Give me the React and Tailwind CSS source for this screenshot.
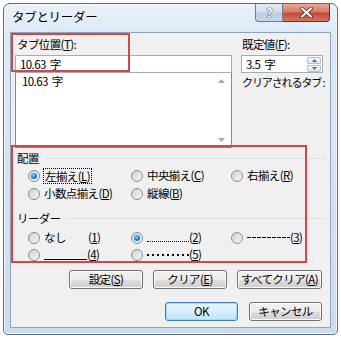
import React from "react";

const font = "font-['Noto_Sans_CJK_JP','Noto_Sans',sans-serif]";

// Win7 style radio
const Radio = ({ checked }) => (
    <span className="w-[12px] h-[12px] shrink-0 rounded-full border border-[#8b8d8f] bg-gradient-to-br from-[#cfd1d3] to-[#f7f7f7] flex items-center justify-center">
        {checked && (
            <span className="w-[6px] h-[6px] rounded-full bg-[radial-gradient(circle_at_40%_35%,#8fd3ff_0,#2a8ad6_45%,#0b4e95_100%)]" />
        )}
    </span>
);

const Key = ({ children }) => <span className="underline underline-offset-1">{children}</span>;

const Btn = ({ children, w, primary }) => (
    <button
        className={`h-[19px] rounded-[3px] border whitespace-nowrap leading-none text-black flex items-center justify-center ${w} ${
            primary
                ? "border-[#3c7fb1] bg-gradient-to-b from-[#eaf6fd] to-[#bee6fd] shadow-[inset_0_0_0_1px_#a7d9f5]"
                : "border-[#707070] bg-[linear-gradient(to_bottom,#f2f2f2_0%,#ebebeb_50%,#dddddd_51%,#cfcfcf_100%)] shadow-[inset_0_0_0_1px_#fcfcfc]"
        }`}
    >
        {children}
    </button>
);

const App = () => {
    return (
        <div className={`w-[341px] h-[339px] bg-white pt-[3px] pl-[3px] text-[11.5px] tracking-[-0.6px] text-black select-none ${font}`}>
            <div className="w-[335px] h-[332px] rounded-t-[7px] rounded-b-[5px] border border-[#5b6a7c] bg-[linear-gradient(to_bottom,#eaf1f9_0px,#dde9f6_28px,#cbdcf0_100%)] flex flex-col px-[6px] pb-[6px] shadow-[inset_0_0_0_1px_#f4f8fc]">
                {/* title bar */}
                <div className="h-[28px] flex items-start justify-between shrink-0">
                    <div className="pl-[2px] pt-[5px] text-[12.5px] leading-[16px] tracking-[-0.3px] text-black">タブとリーダー</div>
                    <div className="flex mr-[1px]">
                        <div className="w-[28px] h-[18px] rounded-bl-[4px] border border-t-0 border-[#6d7d92] bg-[linear-gradient(to_bottom,#e4ecf5_0%,#d3dfec_45%,#bccde0_55%,#c8d7e8_100%)] flex items-center justify-center text-[13px] font-bold text-white [text-shadow:0_0_1px_#222,0_0_1px_#222]">
                            ?
                        </div>
                        <div className="w-[47px] h-[18px] rounded-br-[4px] border border-t-0 border-l-0 border-[#6b2f28] bg-[linear-gradient(to_bottom,#e9a898_0%,#d97a66_45%,#c44a36_55%,#d7745d_100%)] flex items-center justify-center">
                            <svg width="13" height="11" viewBox="0 0 13 11">
                                <path d="M2 1.5 L11 9.5 M11 1.5 L2 9.5" stroke="#3b2020" strokeWidth="3.6" strokeLinecap="round" />
                                <path d="M2 1.5 L11 9.5 M11 1.5 L2 9.5" stroke="#ffffff" strokeWidth="2.2" strokeLinecap="round" />
                            </svg>
                        </div>
                    </div>
                </div>

                {/* client area */}
                <div className="relative flex-1 border border-[#8fa3bb] bg-[#f0f0f0] flex flex-col">
                    {/* top part */}
                    <div className="flex pt-[2px] pl-[4px]">
                        <div className="w-[217px] flex flex-col">
                            <div className="h-[18px] leading-[18px] pl-[2px]">
                                タブ位置(<Key>T</Key>):
                            </div>
                            <div className="mt-[2px] h-[18px] border border-[#a5acb5] bg-white pl-[4px] leading-[16px]">
                                10.63<span className="ml-[4px]">字</span>
                            </div>
                            <div className="relative h-[75px] border border-t-0 border-[#828790] bg-white pl-[6px] leading-[16px]">
                                10.63<span className="ml-[4px]">字</span>
                                <svg className="absolute right-[6px] top-[6px]" width="7" height="4" viewBox="0 0 7 4">
                                    <path d="M0 4 L3.5 0 L7 4 Z" fill="#a9a9a9" />
                                </svg>
                                <svg className="absolute right-[6px] bottom-[5px]" width="7" height="4" viewBox="0 0 7 4">
                                    <path d="M0 0 L3.5 4 L7 0 Z" fill="#a9a9a9" />
                                </svg>
                            </div>
                        </div>
                        <div className="ml-[9px] w-[86px] flex flex-col">
                            <div className="h-[18px] leading-[18px] pl-[1px]">
                                既定値(<Key>F</Key>):
                            </div>
                            <div className="mt-[2px] w-[82px] h-[18px] border border-[#a5acb5] bg-white pl-[4px] flex items-center justify-between">
                                <span className="leading-[16px]">3.5<span className="ml-[4px]">字</span></span>
                                <div className="w-[14px] h-[15px] mr-px flex flex-col gap-px">
                                    <div className="flex-1 rounded-t-[2px] border border-[#b4c2d2] bg-gradient-to-b from-[#f4f8fc] to-[#dce7f2] flex items-center justify-center">
                                        <svg width="5" height="3" viewBox="0 0 5 3"><path d="M0 3 L2.5 0 L5 3 Z" fill="#3a6ea5" /></svg>
                                    </div>
                                    <div className="flex-1 rounded-b-[2px] border border-[#b4c2d2] bg-gradient-to-b from-[#f4f8fc] to-[#dce7f2] flex items-center justify-center">
                                        <svg width="5" height="3" viewBox="0 0 5 3"><path d="M0 0 L2.5 3 L5 0 Z" fill="#3a6ea5" /></svg>
                                    </div>
                                </div>
                            </div>
                            <div className="h-[18px] leading-[18px] pl-[1px] whitespace-nowrap text-[11px] tracking-[-1.1px]">クリアされるタブ :</div>
                        </div>
                    </div>

                    {/* 配置 */}
                    <div className="mt-px h-[18px] flex items-center pl-[6px] pr-[5px]">
                        <span className="leading-[18px]">配置</span>
                        <span className="ml-[6px] flex-1 h-px bg-[#d5dfe5]" />
                    </div>
                    <div className="grid grid-cols-[103px_100px_1fr] pl-[17px]">
                        <div className="h-[18px] flex items-center gap-[3px]">
                            <Radio checked />
                            <span className="border border-dotted border-black px-px leading-[14px]">
                                左揃え(<Key>L</Key>)
                            </span>
                        </div>
                        <div className="h-[18px] flex items-center gap-[4px]">
                            <Radio />
                            <span>中央揃え(<Key>C</Key>)</span>
                        </div>
                        <div className="h-[18px] flex items-center gap-[4px]">
                            <Radio />
                            <span>右揃え(<Key>R</Key>)</span>
                        </div>
                        <div className="h-[18px] flex items-center gap-[4px]">
                            <Radio />
                            <span>小数点揃え(<Key>D</Key>)</span>
                        </div>
                        <div className="h-[18px] flex items-center gap-[4px]">
                            <Radio />
                            <span>縦線(<Key>B</Key>)</span>
                        </div>
                    </div>

                    {/* リーダー */}
                    <div className="mt-[6px] h-[18px] flex items-center pl-[6px] pr-[5px]">
                        <span className="leading-[18px]">リーダー</span>
                        <span className="ml-[6px] flex-1 h-px bg-[#d5dfe5]" />
                    </div>
                    <div className="mt-[2px] grid grid-cols-[103px_100px_1fr] pl-[17px]">
                        <div className="h-[17px] flex items-center gap-[4px]">
                            <Radio />
                            <span className="w-[40px]">なし</span>
                            <span>(<Key>1</Key>)</span>
                        </div>
                        <div className="h-[17px] flex items-center gap-[4px]">
                            <Radio checked />
                            <span className="w-[42px] h-px border-t border-dotted border-black translate-y-[4px]" />
                            <span className="-ml-[4px]">(<Key>2</Key>)</span>
                        </div>
                        <div className="h-[17px] flex items-center gap-[4px]">
                            <Radio />
                            <span className="w-[43px] h-px bg-[repeating-linear-gradient(90deg,#000_0_4px,transparent_4px_5px)]" />
                            <span className="-ml-[4px]">(<Key>3</Key>)</span>
                        </div>
                        <div className="h-[17px] flex items-center gap-[4px]">
                            <Radio />
                            <span className="w-[43px] h-px bg-black translate-y-[5px]" />
                            <span className="-ml-[4px]">(<Key>4</Key>)</span>
                        </div>
                        <div className="h-[17px] flex items-center gap-[4px]">
                            <Radio />
                            <span className="w-[42px] h-[2px] bg-[repeating-linear-gradient(90deg,#000_0_2px,transparent_2px_5px)]" />
                            <span className="-ml-[4px]">(<Key>5</Key>)</span>
                        </div>
                    </div>

                    {/* buttons */}
                    <div className="mt-[7px] flex justify-end gap-[10px] pr-[8px]">
                        <Btn w="w-[74px]">設定(<Key>S</Key>)</Btn>
                        <Btn w="w-[74px]">クリア(<Key>E</Key>)</Btn>
                        <Btn w="w-[85px]">すべてクリア(<Key>A</Key>)</Btn>
                    </div>
                    <div className="mt-[13px] flex justify-end gap-[11px] pr-[8px]">
                        <Btn w="w-[73px]" primary>OK</Btn>
                        <Btn w="w-[73px]">キャンセル</Btn>
                    </div>

                    {/* annotation boxes */}
                    <div className="absolute left-0 top-0 w-[119px] h-[39px] border-2 border-[#cc4a4c] pointer-events-none" />
                    <div className="absolute left-0 top-[112px] w-[296px] h-[118px] border-2 border-[#cc4a4c] pointer-events-none" />
                </div>
            </div>
        </div>
    );
};

export default App;
